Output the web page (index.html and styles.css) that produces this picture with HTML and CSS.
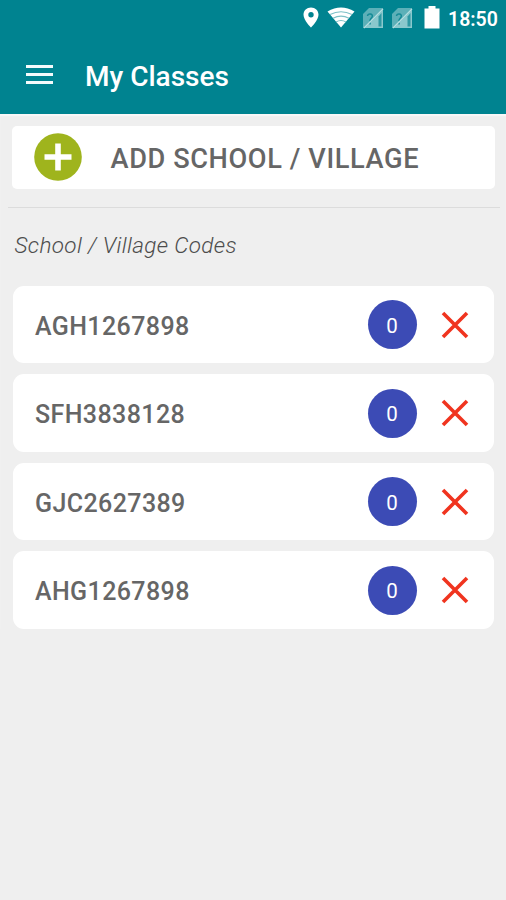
FILE: index.html
```html
<!DOCTYPE html>
<html lang="en">
<head>
<meta charset="utf-8">
<title>My Classes</title>
<link rel="stylesheet" href="styles.css">
</head>
<body>
<svg class="defs" width="0" height="0" aria-hidden="true">
  <symbol id="sim" viewBox="0 0 22 22">
    <path d="M7 1H21V21H1V7Z" fill="#5cb0b8"/>
    <path d="M21 3V21H3Z" fill="#8ac8cd"/>
    <path d="M19.500 6V19.500H16.500V9.500Z" fill="#2e98a3"/>
    <path d="M5.500 9C6 6 11 6.500 10.300 9.500C9.800 11.500 8 11.500 8 14M8 15.500V17.500" fill="none" stroke="#158b97" stroke-width="1.500"/>
    <path d="M2 21L21 2" fill="none" stroke="#b5dde0" stroke-width="1.200"/>
  </symbol>
  <symbol id="cross" viewBox="0 0 28 28">
    <path d="M2 2L26 26M26 2L2 26" stroke="#f0341f" stroke-width="3.600"/>
  </symbol>
</svg>
<header class="header">
  <div class="status">
    <svg class="pin" viewBox="0 0 16 21"><path fill-rule="evenodd" d="M8 .5C3.8.5.5 3.6.5 7.7.5 13 8 20.5 8 20.5S15.5 13 15.5 7.7C15.5 3.6 12.2.5 8 .5ZM8 5a2.7 2.7 0 1 1 0 5.4A2.7 2.7 0 0 1 8 5Z" fill="#fff"/></svg>
    <svg class="wifi" viewBox="0 0 28 21"><path d="M.5 4.5Q14-3.5 27.500 4.500L14 20.500Z" fill="#fff"/><path d="M3 7.500Q14 2 25 7.500M6 11.300Q14 7 22 11.300M9 15Q14 12 19 15" fill="none" stroke="#7cc0c6" stroke-width="1.100"/></svg>
    <svg class="sim"><use href="#sim"/></svg>
    <svg class="sim"><use href="#sim"/></svg>
    <svg class="battery" viewBox="0 0 16 23"><path d="M4.500 0H11.500V2.500H15.500V22.500H.5V2.500H4.500Z" fill="#fff"/></svg>
    <span class="time">18:50</span>
  </div>
  <div class="bar">
    <svg class="menu" viewBox="0 0 27 21"><path d="M0 2.500H27M0 10.500H27M0 18.500H27" stroke="#f4fbfc" stroke-width="3"/></svg>
    <h1 class="title">My Classes</h1>
  </div>
</header>
<main class="content">
  <div class="add">
    <svg class="plus" viewBox="0 0 48 48"><circle cx="24" cy="24" r="23.800" fill="#9fb41d"/><path d="M24 10.500V37.500M10.500 24H37.500" stroke="#fff" stroke-width="5.600"/></svg>
    <span class="add-label">ADD SCHOOL / VILLAGE</span>
  </div>
  <div class="divider"></div>
  <h2 class="caption">School / Village Codes</h2>
  <ul class="list">
    <li class="card"><span class="code">AGH1267898</span><span class="count">0</span><svg class="cross"><use href="#cross"/></svg></li>
    <li class="card"><span class="code">SFH3838128</span><span class="count">0</span><svg class="cross"><use href="#cross"/></svg></li>
    <li class="card"><span class="code">GJC2627389</span><span class="count">0</span><svg class="cross"><use href="#cross"/></svg></li>
    <li class="card"><span class="code">AHG1267898</span><span class="count">0</span><svg class="cross"><use href="#cross"/></svg></li>
  </ul>
</main>
</body>
</html>
```
FILE: styles.css
```css
* { box-sizing: border-box; }
body {
  margin: 0;
  height: 900px;
  background: #efefef;
  font-family: Roboto, "Liberation Sans", sans-serif;
  color: #666;
  overflow: hidden;
}
svg { display: block; flex: none; }
.defs { position: absolute; }
.header { height: 114px; background: #008390; color: #fff; }
.status { display: flex; align-items: center; height: 38px; padding: 0 8px 2px 303px; }
.pin { width: 16px; height: 21px; margin-top: -1px; }
.wifi { width: 28px; height: 21px; margin-left: 8px; margin-top: -1px; }
.sim { width: 22px; height: 22px; margin-left: 7px; }
.battery { width: 16px; height: 23px; margin-left: 11px; margin-top: -2px; }
.time { margin: 3px 0 0 8px; font-size: 19.500px; font-weight: 600; line-height: 24px; white-space: nowrap; }
.bar { display: flex; align-items: center; height: 76px; padding-left: 26.400px; }
.menu { width: 27px; height: 21px; margin-top: -3px; }
.title { margin: 2px 0 0 31.600px; font-size: 28px; font-weight: 500; line-height: 32px; }
.content { padding: 11.500px 12px 0; box-shadow: inset 0 2px 1px #f8f8f8; }
.add { display: flex; align-items: center; height: 63px; margin-right: -1px; padding-left: 22px; background: #fff; border-radius: 5px; }
.plus { width: 48px; height: 48px; }
.add-label { margin: 4px 0 0 28.500px; font-size: 27.200px; font-weight: 500; line-height: 32px; letter-spacing: .6px; white-space: nowrap; }
.divider { height: 1px; margin: 18px -6px 0 -4px; background: #dcdcdc; }
.caption { margin: 23px 0 0 2.500px; font-size: 22.500px; font-weight: 300; font-style: italic; line-height: 28px; letter-spacing: .35px; color: #4c4c4c; }
.list { display: flex; flex-direction: column; gap: 11px; margin: 27.400px 0 0; padding: 0 0 0 1px; list-style: none; }
.card { display: flex; align-items: center; height: 77.500px; padding: 0 25px 0 22px; background: #fff; border-radius: 11px; }
.code { flex: 1; margin-top: 4px; font-size: 25px; font-weight: 500; line-height: 30px; letter-spacing: .4px; }
.count { display: flex; align-items: center; justify-content: center; width: 49px; height: 49px; padding-top: 2px; border-radius: 50%; background: #3c4bb5; color: #fff; font-size: 20.500px; }
.cross { width: 28px; height: 28px; margin-left: 24.500px; }
```
